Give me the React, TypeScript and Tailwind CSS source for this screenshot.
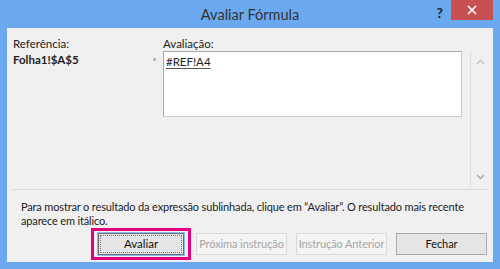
const font = { fontFamily: 'Lato, "Noto Sans", Arial, sans-serif' }

function Button({ label, disabled, focused }: { label: string; disabled?: boolean; focused?: boolean }) {
  if (focused) {
    return (
      <div className="mr-[5px] border-[3px] border-[#e4007f] px-[3px] py-px">
        <div className="border border-[#8cbdf0]">
          <button className="flex h-[22px] w-[86px] items-center justify-center whitespace-nowrap border border-[#6e6e6e] bg-[#e5e5e5] text-[11.5px] text-[#111] outline outline-1 -outline-offset-3 outline-dotted outline-[#777]">
            {label}
          </button>
        </div>
      </div>
    )
  }
  return (
    <button
      className={`flex h-[22px] w-[91px] items-center justify-center whitespace-nowrap border text-[11px] tracking-[-0.1px] ${
        disabled ? 'border-[#d9d9d9] bg-[#f4f4f4] text-[#a6a6a6]' : 'border-[#acacac] bg-[#e5e5e5] text-[11.5px] text-[#111]'
      }`}
    >
      {label}
    </button>
  )
}

export default function App() {
  return (
    <div className="flex h-[269px] w-[500px] flex-col bg-[#6aa9f0] px-[7px] pb-[7px]" style={font}>
      <div className="relative flex h-[28px] items-center justify-center">
        <span className="pt-[2px] text-[14.5px] text-[#333]">Avaliar Fórmula</span>
        <span className="absolute right-[50px] top-[2px] text-[14px] font-bold text-[#222]">?</span>
        <div className="absolute right-0 top-0 flex h-[20px] w-[42px] items-center justify-center bg-[#c75050]">
          <svg width="10" height="10" viewBox="0 0 10 10">
            <path d="M1 1L9 9M9 1L1 9" stroke="#fff" strokeWidth="1.6" />
          </svg>
        </div>
      </div>

      <div className="flex flex-1 flex-col bg-[#f0f0f0] text-[11px] text-[#222]">
        <div className="flex pl-[6px] pt-[7px]">
          <div className="w-[140px] text-[11.5px]">
            <p className="h-[16px]">Referência:</p>
            <p className="font-bold">Folha1!$A$5</p>
          </div>
          <div className="flex w-[10px] pt-[23px]">
            <span className="h-[3px] w-[3px] bg-[#bbb]" />
          </div>
          <div className="flex flex-col text-[11.5px]">
            <p className="h-[16px]">Avaliação:</p>
            <div className="h-[66px] w-[299px] border border-[#ababab] border-b-[#d0d0d0] border-r-[#c8c8c8] bg-white px-[2px] pt-[1px]">
              <span className="underline decoration-[#555] underline-offset-2">#REF!A4</span>
            </div>
          </div>
          <div className="ml-[8px] mt-[17px] flex h-[135px] w-[19px] flex-col items-center justify-between border-l border-[#dcdcdc] py-[7px]">
            <svg width="9" height="6" viewBox="0 0 9 6">
              <path d="M1 5L4.5 1.5L8 5" stroke="#c2c2c2" strokeWidth="1.4" fill="none" />
            </svg>
            <svg width="9" height="6" viewBox="0 0 9 6">
              <path d="M1 1L4.5 4.5L8 1" stroke="#a6a6a6" strokeWidth="1.4" fill="none" />
            </svg>
          </div>
        </div>

        <div className="mx-[5px] mt-[2px] h-px bg-[#dcdcdc]" />

        <p className="mt-[10px] px-[14px] leading-[14px] tracking-[-0.15px]">
          Para mostrar o resultado da expressão sublinhada, clique em “Avaliar”. O resultado mais recente aparece em itálico.
        </p>

        <div className="flex items-center justify-end pr-[6px]">
          <Button label="Avaliar" focused />
          <div className="mr-[9px]">
            <Button label="Próxima instrução" disabled />
          </div>
          <div className="mr-[9px]">
            <Button label="Instrução Anterior" disabled />
          </div>
          <Button label="Fechar" />
        </div>
      </div>
    </div>
  )
}
